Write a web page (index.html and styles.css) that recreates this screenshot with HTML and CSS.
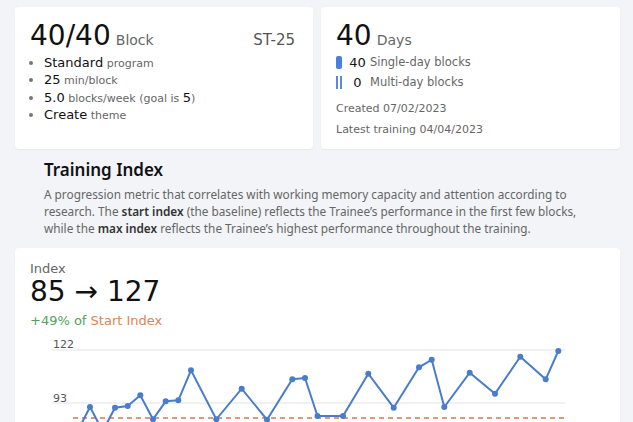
FILE: index.html
```html
<!DOCTYPE html>
<html lang="en">
<head>
    <meta charset="UTF-8">
    <meta name="viewport" content="width=device-width, initial-scale=1.0">
    <title>Training overview</title>
    <link rel="stylesheet" href="styles.css">
</head>
<body>
    <div class="top">
        <div class="card">
            <div class="head">
                <div><span class="big">40/40</span> <span class="unit">Block</span></div>
                <span class="code">ST-25</span>
            </div>
            <ul class="facts">
                <li><strong>Standard</strong> program</li>
                <li><strong>25</strong> min/block</li>
                <li><strong>5.0</strong> blocks/week (goal is <strong>5</strong>)</li>
                <li><strong>Create</strong> theme</li>
            </ul>
        </div>
        <div class="card">
            <div class="head">
                <div><span class="big">40</span> <span class="unit">Days</span></div>
            </div>
            <div class="days">
                <div class="dayrow"><span class="bar single"></span><strong>40</strong> Single-day blocks</div>
                <div class="dayrow"><span class="bar multi"><i></i><i></i></span><strong>0</strong> Multi-day blocks</div>
            </div>
            <div class="dates">
                <div>Created 07/02/2023</div>
                <div>Latest training 04/04/2023</div>
            </div>
        </div>
    </div>

    <div class="about">
        <h2>Training Index</h2>
        <p>A progression metric that correlates with working memory capacity and attention according to research. The <b>start index</b> (the baseline) reflects the Trainee’s performance in the first few blocks, while the <b>max index</b> reflects the Trainee’s highest performance throughout the training.</p>
    </div>

    <div class="card chartcard">
        <div class="label">Index</div>
        <div class="big">85 → 127</div>
        <div class="gain"><span class="up">+49% of</span> <span class="start">Start Index</span></div>
        <svg class="chart" width="590" height="120" viewBox="0 0 590 120">
            <text x="23" y="12" class="axis">122</text>
            <text x="23" y="66" class="axis">93</text>
            <line x1="22" y1="14" x2="535" y2="14" class="grid"/>
            <line x1="22" y1="67" x2="535" y2="67" class="grid"/>
            <line x1="43" y1="82" x2="535" y2="82" class="baseline"/>
            <polyline class="line" points="35,105 47.7,95 60,71 72.7,95 85,71.7 97.7,70 110.3,59.3 123,83.3 135.7,65.3 148.3,64.3 161,34.3 186.3,83.3 211.7,52.7 237,83.7 262.3,43.3 275,42 287.5,80 313,80 338.3,37.7 363.7,71.7 389,31.3 401.7,23.7 414.3,71 439.7,36.7 465,57.7 490.3,20.7 515.7,43.3 528.3,15"/>
            <g class="dots">
                <circle cx="35" cy="105" r="3"/><circle cx="47.7" cy="95" r="3"/><circle cx="60" cy="71" r="3"/>
                <circle cx="72.7" cy="95" r="3"/><circle cx="85" cy="71.7" r="3"/><circle cx="97.7" cy="70" r="3"/>
                <circle cx="110.3" cy="59.3" r="3"/><circle cx="123" cy="83.3" r="3"/><circle cx="135.7" cy="65.3" r="3"/>
                <circle cx="148.3" cy="64.3" r="3"/><circle cx="161" cy="34.3" r="3"/><circle cx="186.3" cy="83.3" r="3"/>
                <circle cx="211.7" cy="52.7" r="3"/><circle cx="237" cy="83.7" r="3"/><circle cx="262.3" cy="43.3" r="3"/>
                <circle cx="275" cy="42" r="3"/><circle cx="287.5" cy="80" r="3"/><circle cx="313" cy="80" r="3"/>
                <circle cx="338.3" cy="37.7" r="3"/><circle cx="363.7" cy="71.7" r="3"/><circle cx="389" cy="31.3" r="3"/>
                <circle cx="401.7" cy="23.7" r="3"/><circle cx="414.3" cy="71" r="3"/><circle cx="439.7" cy="36.7" r="3"/>
                <circle cx="465" cy="57.7" r="3"/><circle cx="490.3" cy="20.7" r="3"/><circle cx="515.7" cy="43.3" r="3"/>
                <circle cx="528.3" cy="15" r="3"/>
            </g>
        </svg>
    </div>
</body>
</html>
```

FILE: styles.css
```css
body {
    margin: 0;
    padding: 7px 13px 0 15px;
    background: #f2f4f7;
    font-family: "DejaVu Sans", sans-serif;
    color: #111;
    overflow: hidden;
}
.top {
    display: grid;
    grid-template-columns: 298px 1fr;
    gap: 8px;
}
.card {
    background: #fff;
    border-radius: 4px;
    box-shadow: 0 1px 2px rgba(0, 0, 0, 0.06);
    padding: 12px 15px;
    height: 142px;
    box-sizing: border-box;
}
.head {
    display: flex;
    justify-content: space-between;
    align-items: baseline;
}
.big {
    font-size: 28px;
    line-height: 34px;
}
.unit {
    font-size: 14px;
    color: #666;
}
.code {
    font-size: 15px;
    color: #555;
    margin-right: 3px;
}
.facts {
    margin: 1px 0 0;
    padding-left: 14px;
    font-size: 11px;
    color: #666;
}
.facts li {
    height: 17.3px;
    line-height: 17px;
}
.facts li::marker {
    font-size: 12.5px;
    color: #777;
}
.facts strong, .days strong {
    font-weight: normal;
    font-size: 13px;
    line-height: 1;
    color: #111;
}
.days {
    font-size: 11.5px;
    color: #666;
    margin-top: -1px;
}
.dayrow {
    display: flex;
    align-items: center;
    height: 20px;
}
.dayrow strong {
    width: 17px;
    text-align: center;
    margin-right: 4px;
}
.bar {
    width: 6px;
    height: 13px;
    margin-right: 7px;
}
.single {
    background: #4a7fdf;
    border-radius: 2px;
}
.multi {
    display: flex;
    justify-content: space-between;
}
.multi i {
    width: 2px;
    background: #5b8ad9;
}
.dates {
    font-size: 11px;
    color: #666;
    margin-top: 6px;
    line-height: 21px;
}
.about {
    padding: 9px 18px 0 29px;
    font-family: "Noto Sans", sans-serif;
}
.about h2 {
    margin: 0;
    font-size: 17px;
    font-weight: 600;
    color: #111;
}
.about p {
    margin: 5px 0 0;
    font-size: 11.8px;
    line-height: 17px;
    color: #666;
}
.about b {
    font-weight: 600;
    color: #333;
}
.chartcard {
    margin-top: 11px;
    height: 200px;
    padding-top: 13px;
}
.label {
    font-size: 13px;
    color: #666;
    line-height: 16px;
}
.chartcard .big {
    line-height: 30px;
}
.gain {
    font-size: 13px;
    margin-top: 6px;
}
.up {
    color: #56a05a;
}
.start {
    color: #db8552;
}
.chart {
    display: block;
    margin-top: 8px;
}
.axis {
    font-size: 11px;
    fill: #555;
    font-family: "DejaVu Sans", sans-serif;
}
.grid {
    stroke: #e3e3e3;
    stroke-width: 1;
}
.baseline {
    stroke: #d9774f;
    stroke-width: 1.5;
    stroke-dasharray: 5 4;
}
.line {
    fill: none;
    stroke: #4a7ccc;
    stroke-width: 2;
}
.dots circle {
    fill: #4a7ccc;
}
```
